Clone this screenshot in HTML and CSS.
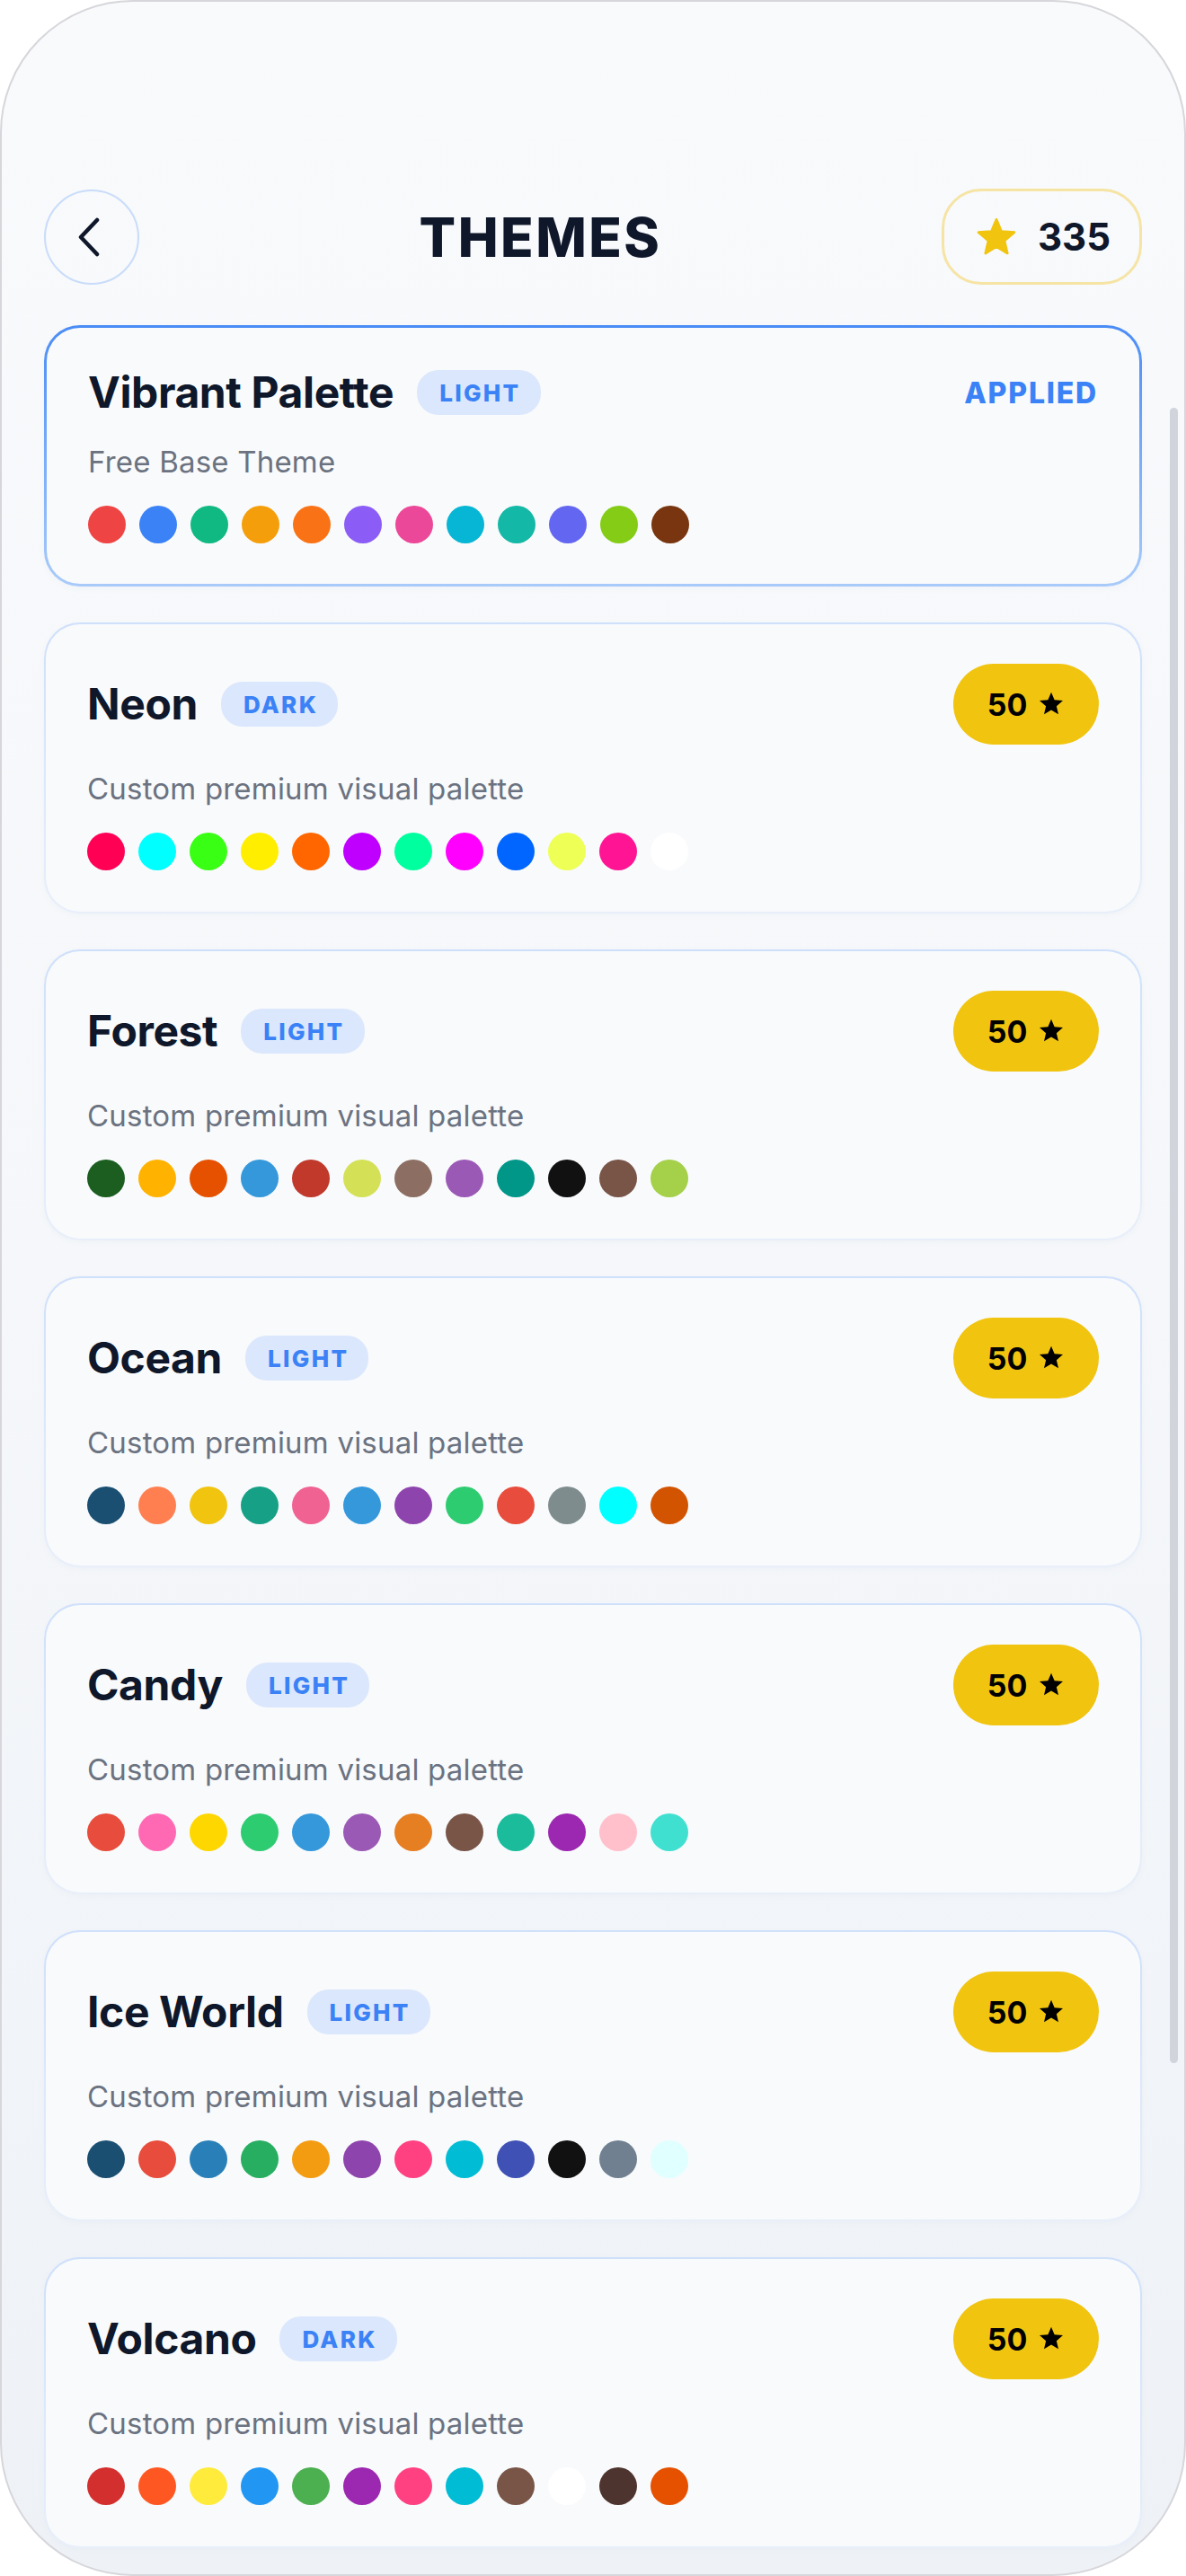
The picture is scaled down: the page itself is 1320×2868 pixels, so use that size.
FILE: index.html
```html
<!DOCTYPE html>
<html lang="en">
<head>
<meta charset="utf-8">
<title>Themes</title>
<link rel="stylesheet" href="styles.css">
</head>
<body>
<div class="frame">
  <header class="topbar">
    <button class="back" aria-label="Back">
      <svg width="26" height="44" viewBox="0 0 26 44"><path d="M22 3 L4 22 L22 41" fill="none" stroke="#0f172a" stroke-width="4.5" stroke-linecap="round" stroke-linejoin="round"/></svg>
    </button>
    <h1 class="title">THEMES</h1>
    <div class="coins">
      <svg class="coin-star" width="46" height="44" viewBox="0 0 24 23"><path d="M12 1.2 L14.9 8.1 L22.4 8.7 L16.7 13.6 L18.4 20.9 L12 17 L5.6 20.9 L7.3 13.6 L1.6 8.7 L9.1 8.1 Z" fill="#f1c40f" stroke="#f1c40f" stroke-width="1.4" stroke-linejoin="round"/></svg>
      <span class="coin-count">335</span>
    </div>
  </header>

  <main class="list">
    <section class="card applied">
      <div class="card-head">
        <div class="name-wrap"><h2 class="name">Vibrant Palette</h2><span class="badge">LIGHT</span></div>
        <span class="applied-label">APPLIED</span>
      </div>
      <p class="desc">Free Base Theme</p>
      <div class="dots">
        <i style="background:#ef4444"></i><i style="background:#3b82f6"></i><i style="background:#10b981"></i><i style="background:#f59e0b"></i><i style="background:#f97316"></i><i style="background:#8b5cf6"></i><i style="background:#ec4899"></i><i style="background:#06b6d4"></i><i style="background:#14b8a6"></i><i style="background:#6366f1"></i><i style="background:#84cc16"></i><i style="background:#78350f"></i>
      </div>
    </section>

    <section class="card">
      <div class="card-head">
        <div class="name-wrap"><h2 class="name">Neon</h2><span class="badge">DARK</span></div>
        <span class="price">50 <svg class="pstar" width="30" height="29" viewBox="0 0 24 23"><path d="M12 1.2 L14.9 8.1 L22.4 8.7 L16.7 13.6 L18.4 20.9 L12 17 L5.6 20.9 L7.3 13.6 L1.6 8.7 L9.1 8.1 Z" fill="#000"/></svg></span>
      </div>
      <p class="desc">Custom premium visual palette</p>
      <div class="dots">
        <i style="background:#ff0055"></i><i style="background:#00ffff"></i><i style="background:#39ff14"></i><i style="background:#ffee00"></i><i style="background:#ff6600"></i><i style="background:#bf00ff"></i><i style="background:#00ff9f"></i><i style="background:#ff00ff"></i><i style="background:#0066ff"></i><i style="background:#eeff55"></i><i style="background:#ff1493"></i><i style="background:#ffffff"></i>
      </div>
    </section>

    <section class="card">
      <div class="card-head">
        <div class="name-wrap"><h2 class="name">Forest</h2><span class="badge">LIGHT</span></div>
        <span class="price">50 <svg class="pstar" width="30" height="29" viewBox="0 0 24 23"><path d="M12 1.2 L14.9 8.1 L22.4 8.7 L16.7 13.6 L18.4 20.9 L12 17 L5.6 20.9 L7.3 13.6 L1.6 8.7 L9.1 8.1 Z" fill="#000"/></svg></span>
      </div>
      <p class="desc">Custom premium visual palette</p>
      <div class="dots">
        <i style="background:#1b5e20"></i><i style="background:#ffb300"></i><i style="background:#e65100"></i><i style="background:#3498db"></i><i style="background:#c0392b"></i><i style="background:#d4e157"></i><i style="background:#8d6e63"></i><i style="background:#9b59b6"></i><i style="background:#009688"></i><i style="background:#111111"></i><i style="background:#795548"></i><i style="background:#a5d049"></i>
      </div>
    </section>

    <section class="card">
      <div class="card-head">
        <div class="name-wrap"><h2 class="name">Ocean</h2><span class="badge">LIGHT</span></div>
        <span class="price">50 <svg class="pstar" width="30" height="29" viewBox="0 0 24 23"><path d="M12 1.2 L14.9 8.1 L22.4 8.7 L16.7 13.6 L18.4 20.9 L12 17 L5.6 20.9 L7.3 13.6 L1.6 8.7 L9.1 8.1 Z" fill="#000"/></svg></span>
      </div>
      <p class="desc">Custom premium visual palette</p>
      <div class="dots">
        <i style="background:#1b4f72"></i><i style="background:#ff7f50"></i><i style="background:#f1c40f"></i><i style="background:#16a085"></i><i style="background:#f06292"></i><i style="background:#3498db"></i><i style="background:#8e44ad"></i><i style="background:#2ecc71"></i><i style="background:#e74c3c"></i><i style="background:#7f8c8d"></i><i style="background:#00ffff"></i><i style="background:#d35400"></i>
      </div>
    </section>

    <section class="card">
      <div class="card-head">
        <div class="name-wrap"><h2 class="name">Candy</h2><span class="badge">LIGHT</span></div>
        <span class="price">50 <svg class="pstar" width="30" height="29" viewBox="0 0 24 23"><path d="M12 1.2 L14.9 8.1 L22.4 8.7 L16.7 13.6 L18.4 20.9 L12 17 L5.6 20.9 L7.3 13.6 L1.6 8.7 L9.1 8.1 Z" fill="#000"/></svg></span>
      </div>
      <p class="desc">Custom premium visual palette</p>
      <div class="dots">
        <i style="background:#e74c3c"></i><i style="background:#ff69b4"></i><i style="background:#ffd700"></i><i style="background:#2ecc71"></i><i style="background:#3498db"></i><i style="background:#9b59b6"></i><i style="background:#e67e22"></i><i style="background:#795548"></i><i style="background:#1abc9c"></i><i style="background:#9c27b0"></i><i style="background:#ffc0cb"></i><i style="background:#40e0d0"></i>
      </div>
    </section>

    <section class="card">
      <div class="card-head">
        <div class="name-wrap"><h2 class="name">Ice World</h2><span class="badge">LIGHT</span></div>
        <span class="price">50 <svg class="pstar" width="30" height="29" viewBox="0 0 24 23"><path d="M12 1.2 L14.9 8.1 L22.4 8.7 L16.7 13.6 L18.4 20.9 L12 17 L5.6 20.9 L7.3 13.6 L1.6 8.7 L9.1 8.1 Z" fill="#000"/></svg></span>
      </div>
      <p class="desc">Custom premium visual palette</p>
      <div class="dots">
        <i style="background:#1b4f72"></i><i style="background:#e74c3c"></i><i style="background:#2980b9"></i><i style="background:#27ae60"></i><i style="background:#f39c12"></i><i style="background:#8e44ad"></i><i style="background:#ff4081"></i><i style="background:#00bcd4"></i><i style="background:#3f51b5"></i><i style="background:#111111"></i><i style="background:#708090"></i><i style="background:#e0ffff"></i>
      </div>
    </section>

    <section class="card">
      <div class="card-head">
        <div class="name-wrap"><h2 class="name">Volcano</h2><span class="badge">DARK</span></div>
        <span class="price">50 <svg class="pstar" width="30" height="29" viewBox="0 0 24 23"><path d="M12 1.2 L14.9 8.1 L22.4 8.7 L16.7 13.6 L18.4 20.9 L12 17 L5.6 20.9 L7.3 13.6 L1.6 8.7 L9.1 8.1 Z" fill="#000"/></svg></span>
      </div>
      <p class="desc">Custom premium visual palette</p>
      <div class="dots">
        <i style="background:#d32f2f"></i><i style="background:#ff5722"></i><i style="background:#ffeb3b"></i><i style="background:#2196f3"></i><i style="background:#4caf50"></i><i style="background:#9c27b0"></i><i style="background:#ff4081"></i><i style="background:#00bcd4"></i><i style="background:#795548"></i><i style="background:#ffffff"></i><i style="background:#4e342e"></i><i style="background:#e65100"></i>
      </div>
    </section>
  </main>
  <div class="scroll-thumb"></div>
</div>
</body>
</html>
```

FILE: styles.css
```css
* { box-sizing: border-box; }
html, body { margin: 0; padding: 0; background: #ffffff; }
body { font-family: Inter, "Noto Sans", sans-serif; color: #0f172a; }

.frame {
  position: relative;
  width: 1320px;
  height: 2868px;
  border: 2px solid #d6d6db;
  border-radius: 148px;
  overflow: hidden;
  background: linear-gradient(to bottom, #f8fafc 0%, #f5f7fa 50%, #eef2f7 100%);
  padding: 208px 47px 0;
}

.topbar {
  display: flex;
  align-items: center;
  justify-content: space-between;
  height: 107px;
}

.back {
  width: 106px;
  height: 106px;
  border-radius: 50%;
  border: 2px solid #c9dcfa;
  background: transparent;
  display: flex;
  align-items: center;
  justify-content: center;
  padding: 0 6px 0 0;
}

.title {
  margin: 0;
  font-size: 60px;
  font-weight: 800;
  letter-spacing: 2.5px;
  line-height: 1;
  color: #0f172a;
}

.coins {
  width: 223px;
  height: 107px;
  border: 3px solid #f6e4a4;
  border-radius: 44px;
  display: flex;
  align-items: center;
  padding-left: 35px;
  gap: 23px;
}
.coin-count {
  font-size: 42px;
  font-weight: 700;
  color: #0f172a;
}

.list {
  display: flex;
  flex-direction: column;
  gap: 40px;
  margin-top: 45px;
}

.card {
  border: 2px solid transparent;
  border-radius: 40px;
  background:
    linear-gradient(#f8fafc, #f8fafc) padding-box,
    linear-gradient(to bottom, #cfe0fb, #e8effa) border-box;
  padding: 44px 46px 46px;
  box-shadow: 0 2px 6px rgba(148, 163, 184, 0.06);
}
.card.applied {
  border-width: 3px;
  background:
    linear-gradient(#f9fafb, #f9fafb) padding-box,
    linear-gradient(to bottom, #4a8cf6, #a9cbfa) border-box;
  padding-bottom: 45px;
}

.card-head {
  display: flex;
  align-items: center;
  justify-content: space-between;
  min-height: 56px;
}
.name-wrap {
  display: flex;
  align-items: center;
  gap: 26px;
}
.name {
  margin: 0;
  font-size: 48px;
  line-height: 56px;
  font-weight: 700;
  letter-spacing: -0.4px;
  color: #0f172a;
}
.badge {
  height: 50px;
  display: inline-flex;
  align-items: center;
  padding: 0 22px 0 25px;
  border-radius: 24px;
  background: #dbe7fc;
  color: #3b82f6;
  font-size: 26px;
  font-weight: 800;
  letter-spacing: 2.3px;
}
.applied-label {
  color: #3b82f6;
  font-size: 32px;
  font-weight: 800;
  letter-spacing: 1.8px;
}
.price {
  width: 162px;
  height: 90px;
  border-radius: 45px;
  background: #f1c40f;
  display: inline-flex;
  align-items: center;
  justify-content: center;
  gap: 12px;
  font-size: 34px;
  font-weight: 700;
  color: #000;
}
.pstar { margin-top: -2px; }

.desc {
  margin: 25px 0 0;
  font-size: 33px;
  line-height: 48px;
  letter-spacing: 0.2px;
  color: #6b7280;
}

.dots {
  display: flex;
  gap: 15px;
  margin-top: 25px;
}
.dots i {
  display: block;
  width: 42px;
  height: 42px;
  border-radius: 50%;
}

.scroll-thumb {
  position: absolute;
  left: 1300px;
  top: 452px;
  width: 9px;
  height: 1843px;
  border-radius: 5px;
  background: #d1d5db;
}
```
